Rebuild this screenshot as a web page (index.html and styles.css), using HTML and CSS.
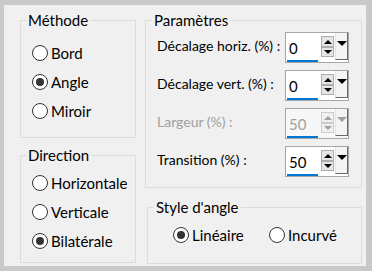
FILE: index.html
```html
<!DOCTYPE html>
<html lang="fr">
<head>
    <meta charset="UTF-8">
    <title>Angle</title>
    <link rel="stylesheet" href="styles.css">
</head>
<body>
    <div class="panel">
        <div class="col lc">
            <fieldset class="grp gm">
                <legend>Méthode</legend>
                <div class="opts om">
                    <label class="rb"><span class="dot"></span>Bord</label>
                    <label class="rb"><span class="dot on"></span>Angle</label>
                    <label class="rb"><span class="dot"></span>Miroir</label>
                </div>
            </fieldset>
            <fieldset class="grp gd">
                <legend>Direction</legend>
                <div class="opts od">
                    <label class="rb"><span class="dot"></span>Horizontale</label>
                    <label class="rb"><span class="dot"></span>Verticale</label>
                    <label class="rb"><span class="dot on"></span>Bilatérale</label>
                </div>
            </fieldset>
        </div>
        <div class="col rc">
            <fieldset class="grp gp">
                <legend>Paramètres</legend>
                <div class="rows">
                    <div class="row">
                        <span class="lb">Décalage horiz. (%) :</span>
                        <div class="spin"><div class="ed">0</div><div class="ar"><span class="up"></span><span class="dn"></span></div><div class="dr"></div></div>
                    </div>
                    <div class="row">
                        <span class="lb">Décalage vert. (%) :</span>
                        <div class="spin"><div class="ed">0</div><div class="ar"><span class="up"></span><span class="dn"></span></div><div class="dr"></div></div>
                    </div>
                    <div class="row off">
                        <span class="lb">Largeur (%) :</span>
                        <div class="spin"><div class="ed">50</div><div class="ar"><span class="up"></span><span class="dn"></span></div><div class="dr"></div></div>
                    </div>
                    <div class="row">
                        <span class="lb">Transition (%) :</span>
                        <div class="spin"><div class="ed">50</div><div class="ar"><span class="up"></span><span class="dn"></span></div><div class="dr"></div></div>
                    </div>
                </div>
            </fieldset>
            <fieldset class="grp gs">
                <legend>Style d'angle</legend>
                <div class="opts os">
                    <label class="rb w1"><span class="dot on"></span>Linéaire</label>
                    <label class="rb"><span class="dot"></span>Incurvé</label>
                </div>
            </fieldset>
        </div>
    </div>
</body>
</html>
```

FILE: styles.css
```css
body {
    margin: 0;
    padding: 5px 6px 5px 4px;
    background-color: #c9c9c9;
    font-family: Lato, "Noto Sans", sans-serif;
    font-size: 15px;
    color: #000;
}
.panel {
    width: 362px;
    height: 261px;
    box-sizing: border-box;
    background-color: #f0f0f0;
    display: flex;
    gap: 9px;
    padding: 5px 4px 0 16px;
}
.col {
    display: flex;
    flex-direction: column;
}
.lc {
    width: 116px;
    gap: 7px;
}
.rc {
    width: 217px;
    gap: 9px;
}
.grp {
    margin: 0;
    padding: 0;
    min-width: 0;
    box-sizing: border-box;
    border: 1px solid #dcdcdc;
}
.grp legend {
    margin-left: 5px;
    padding: 0 2px;
    line-height: 20px;
}
.gm { height: 128px; }
.gd { height: 118px; }
.gp { height: 178px; }
.gp legend { margin-left: 6px; }
.gs {
    height: 67px;
    margin-left: 2px;
}
.gs legend { margin-left: 6px; }
.opts {
    display: flex;
    flex-direction: column;
    padding-left: 11px;
}
.om { padding-top: 8px; }
.od { padding-top: 3px; }
.rb {
    display: flex;
    align-items: center;
    height: 29px;
    gap: 3px;
}
.dot {
    width: 16px;
    height: 16px;
    box-sizing: border-box;
    border: 1px solid #333;
    border-radius: 50%;
    background-color: #fff;
    display: flex;
    align-items: center;
    justify-content: center;
}
.dot.on::after {
    content: "";
    width: 8px;
    height: 8px;
    border-radius: 50%;
    background-color: #333;
}
.os {
    flex-direction: row;
    padding-left: 25px;
    padding-top: 3px;
}
.w1 { width: 96px; }
.rows {
    display: flex;
    flex-direction: column;
    gap: 7px;
    padding: 2px 12px 0 11px;
}
.row {
    display: flex;
    align-items: center;
    justify-content: space-between;
    height: 31px;
}
.row .lb {
    margin-top: -4px;
    font-size: 14px;
    white-space: nowrap;
}
.spin {
    width: 64px;
    height: 31px;
    box-sizing: border-box;
    border: 1px solid #a6a6a6;
    background-color: #fff;
    display: flex;
    align-items: flex-start;
}
.ed {
    width: 31px;
    height: 29px;
    margin-left: 1px;
    box-sizing: border-box;
    border-bottom: 2px solid #0078d7;
    padding: 5px 0 0 2px;
    line-height: 20px;
}
.ar {
    display: flex;
    flex-direction: column;
    width: 13px;
    margin: 3px 0 0 3px;
}
.ar span {
    box-sizing: border-box;
    border: 1px solid #adadad;
    background-color: #e5e5e5;
    display: flex;
    align-items: center;
    justify-content: center;
}
.ar .up { height: 11px; }
.ar .dn { height: 10px; }
.ar span::after {
    content: "";
    border-left: 4px solid transparent;
    border-right: 4px solid transparent;
}
.ar .up::after { border-bottom: 4px solid #000; }
.ar .dn::after { border-top: 4px solid #000; }
.dr {
    width: 13px;
    height: 27px;
    margin-left: 1px;
    box-sizing: border-box;
    background-color: #f4f4f4;
    border-right: 1px solid #696969;
    border-bottom: 1px solid #696969;
    border-left: 1px solid #e3e3e3;
    display: flex;
    justify-content: center;
    padding-top: 8px;
}
.dr::after {
    content: "";
    height: 0;
    border-left: 5px solid transparent;
    border-right: 5px solid transparent;
    border-top: 5px solid #000;
}
.off .lb,
.off .ed {
    color: #a0a0a0;
}
.off .spin { background-color: #f7f7f7; }
.off .ar span {
    background-color: #f0f0f0;
    border-color: #cccccc;
}
.off .ar .up::after { border-bottom-color: #a0a0a0; }
.off .ar .dn::after { border-top-color: #a0a0a0; }
.off .dr::after { border-top-color: #a0a0a0; }
```
